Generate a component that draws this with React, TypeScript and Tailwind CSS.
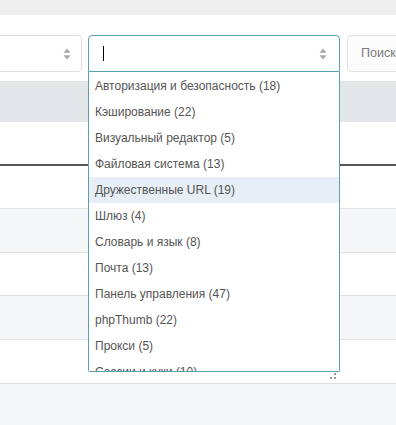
import React from "react";

const items = [
  "Авторизация и безопасность (18)",
  "Кэширование (22)",
  "Визуальный редактор (5)",
  "Файловая система (13)",
  "Дружественные URL (19)",
  "Шлюз (4)",
  "Словарь и язык (8)",
  "Почта (13)",
  "Панель управления (47)",
  "phpThumb (22)",
  "Прокси (5)",
  "Сессии и куки (10)",
];

function Spinner() {
  return (
    <svg width="8" height="12" viewBox="0 0 8 12" className="shrink-0">
      <path d="M4 0.5 L7.5 4.8 L0.5 4.8 Z" fill="#a9a9a9" />
      <path d="M4 11.5 L7.5 7.2 L0.5 7.2 Z" fill="#a9a9a9" />
    </svg>
  );
}

export default function App() {
  const font = { fontFamily: '"Liberation Sans", Arial, sans-serif' };
  return (
    <div className="relative w-[396px] h-[425px] overflow-hidden bg-white" style={font}>
      <div className="h-[15px] bg-[#efefef]" />
      <div className="h-[20px]" />
      <div className="flex h-[37px]">
        <div className="shrink-0 ml-[-40px] w-[122px] h-[37px] border border-[#dedede] rounded-[4px] bg-white flex items-center justify-end pr-[10px]">
          <Spinner />
        </div>
        <div className="shrink-0 ml-[6px] w-[252px] h-[37px] border border-[#58a0ad] rounded-t-[4px] bg-white flex items-center pl-[14px] pr-[12px]">
          <div className="w-[1px] h-[15px] bg-black" />
          <div className="flex-1" />
          <Spinner />
        </div>
        <div className="shrink-0 ml-[7px] w-[80px] h-[37px] border border-[#e2e2e2] rounded-[4px] bg-[#fcfcfc] flex items-center pl-[13px] text-[12.5px] text-[#7a7a7a]">
          Поиск
        </div>
      </div>
      <div className="h-[9px]" />
      <div className="h-[41px] bg-[#e4e7ea]" />
      <div className="h-[42px] bg-white" />
      <div className="h-[2px] bg-[#555555]" />
      <div className="h-[43px] bg-white border-b border-[#e2e2e2]" />
      <div className="h-[44px] bg-[#f6f7f9] border-b border-[#e2e2e2]" />
      <div className="h-[43px] bg-white border-b border-[#e2e2e2]" />
      <div className="h-[44px] bg-[#f6f7f9] border-b border-[#e2e2e2]" />
      <div className="h-[44px] bg-white border-b border-[#e2e2e2]" />
      <div className="h-[60px] bg-[#f5f6f8]" />

      <div className="absolute left-[88px] top-[72px] w-[252px] h-[300px] bg-white border-x border-b border-[#58a0ad] rounded-b-[2px] overflow-hidden pt-[1px]">
        {items.map((t, i) => (
          <div
            key={t}
            className={
              "h-[26px] flex items-center pl-[6px] text-[12px] text-[#555555] whitespace-nowrap " +
              (i === 4 ? "bg-[#e7eef6]" : "")
            }
          >
            {t}
          </div>
        ))}
      </div>
      <svg className="absolute left-[330px] top-[373px]" width="7" height="7" viewBox="0 0 7 7">
        <rect x="4" y="0" width="2" height="2" fill="#9a9a9a" />
        <rect x="0" y="4" width="2" height="2" fill="#9a9a9a" />
        <rect x="4" y="4" width="2" height="2" fill="#9a9a9a" />
      </svg>
    </div>
  );
}
